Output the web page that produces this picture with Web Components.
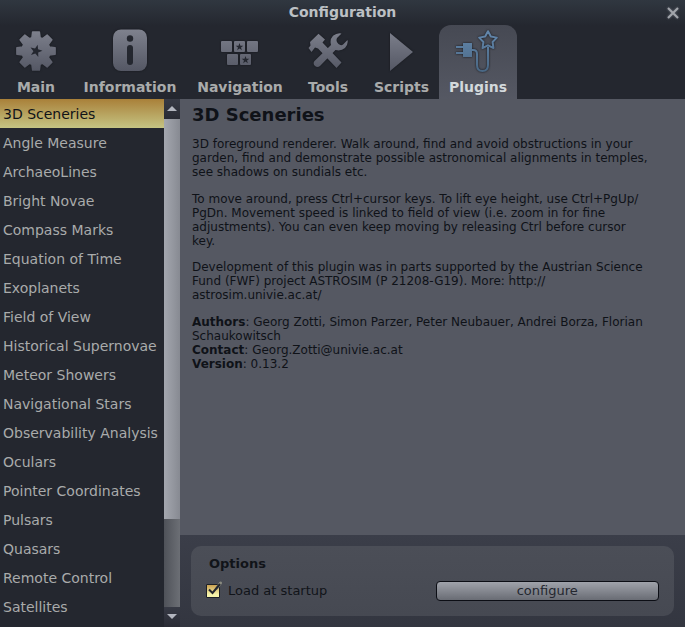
<!DOCTYPE html>
<html lang="en">
<head>
<meta charset="utf-8">
<title>Configuration</title>
<style>
html, body { height: 100%; margin: 0; background: #24272f; }
body { font: 14px "DejaVu Sans", Verdana, sans-serif; color: #a9abab; overflow: hidden; }
</style>
</head>
<body>
<config-window></config-window>
<script>
const define = (name, html, setup) => {
  const template = document.createElement('template');
  template.innerHTML = html;
  customElements.define(name, class extends HTMLElement {
    constructor() {
      super();
      this.attachShadow({ mode: 'open' }).append(template.content.cloneNode(true));
    }
    connectedCallback() { if (setup) setup(this, this.shadowRoot); }
  });
};

const star = (cx, cy, r, k, turn = 0) => {
  const pts = [];
  for (let i = 0; i < 10; i++) {
    const a = (turn - 90 + i * 36) * Math.PI / 180, q = i % 2 ? r * k : r;
    pts.push((cx + q * Math.cos(a)).toFixed(2) + ',' + (cy + q * Math.sin(a)).toFixed(2));
  }
  return pts.join(' ');
};
const gearOutline = () => {
  const pts = [], add = (r, deg) => {
    const a = deg * Math.PI / 180;
    pts.push((24 + r * Math.cos(a)).toFixed(2) + ',' + (26 + r * Math.sin(a)).toFixed(2));
  };
  for (let t = 0; t < 360; t += 45) { add(14, t - 17); add(19.4, t - 10); add(19.4, t + 10); add(14, t + 17); }
  return pts.join(' ');
};
const icons = {
  gear: `<polygon points="${gearOutline()}" stroke="url(#g)" stroke-width="1.5" stroke-linejoin="round"/><polygon fill="#24272f" points="${star(24, 26, 6.5, .4, 15)}"/>`,
  info: `<rect x="7" y="4.500" width="34" height="41.500" rx="8"/><g fill="#24272f"><circle cx="24" cy="13.500" r="3.200"/><rect x="21" y="20" width="6" height="20" rx="3"/></g>`,
  map: `<rect x="5" y="16" width="11" height="11" rx="1"/><rect x="18" y="16" width="11" height="11" rx="1"/><rect x="31" y="16" width="11" height="11" rx="1"/><rect x="11" y="29" width="11" height="11" rx="1"/><rect x="24" y="29" width="11" height="11" rx="1"/><g fill="#24272f"><polygon points="${star(23.5, 22, 4, .4)}"/><polygon points="${star(29.5, 35, 4, .4)}"/></g>`,
  tools: `<path d="M4.500 23 L6.500 20.500 L6 17 L14.500 8.700 L21 14.500 L18.500 17.500 L37.500 37.500 L32.500 43 L14 23.500 L11 22.500 L7.500 27 Z"/><path d="M37.500 8.500 L33 13 Q31.500 16.500 34.500 19 Q37 21 39 19.500 L43.500 15 Q44.500 19 41 23 Q37 26.500 31.500 25 L16 41 Q13.500 43 11 41 Q8.500 38.500 10.500 36 L27 20 Q25.500 14.500 29 10.800 Q33 7.500 37.500 8.500 Z"/>`,
  play: `<path d="M12 8 L35 27 L12 46 Z"/>`,
  plug: `<g fill="none" stroke="url(#g)" stroke-width="2"><path d="M2 22 H9 M2 28 H9 M18 25 H19 Q23 25 23 29 V40 Q23 46 28.500 46 Q34 46 34 40 V22"/><polygon stroke-linejoin="round" points="${star(34, 15.5, 9.3, .52)}"/></g><rect x="9" y="18" width="9" height="14"/>`
};

define('tab-icon', `
<style>
:host { display: block; width: 48px; height: 50px; }
svg { display: block; filter: drop-shadow(0 0 1px #14161b); }
</style>
<svg width="48" height="50" viewBox="0 0 48 50" aria-hidden="true"></svg>`, (el, root) => {
  const blue = el.getAttribute('name') === 'plug';
  root.querySelector('svg').innerHTML = `<defs><linearGradient id="g" gradientUnits="userSpaceOnUse" x1="0" y1="5" x2="0" y2="46"><stop stop-color="${blue ? '#6488ad' : '#7e818d'}"/><stop offset="1" stop-color="${blue ? '#4a6885' : '#545764'}"/></linearGradient></defs><g fill="url(#g)">${icons[el.getAttribute('name')]}</g>`;
});

define('title-bar', `
<style>
:host { display: grid; grid-template-columns: 24px 1fr 24px; align-items: center; height: 25px; text-align: center; color: #bcc0c4; }
h1 { grid-column: 2; margin: 0; font: bold 14px/25px "DejaVu Sans", sans-serif; }
button { width: 24px; height: 24px; padding: 0; border: 0; background: none; display: grid; place-items: center; }
svg { filter: drop-shadow(0 0 1px #6b6f78); }
</style>
<h1><slot></slot></h1>
<button aria-label="Close"><svg width="14" height="14" viewBox="0 0 14 14"><path d="M2 2 L12 12 M12 2 L2 12" stroke="#a2a5ab" stroke-width="2"/></svg></button>`);

define('config-tab', `
<style>
:host { display: block; }
button { box-sizing: border-box; width: 100%; height: 74px; padding: 0; border: 0; border-radius: 12px 12px 0 0; background: none; color: inherit; font: bold 14px/24px "DejaVu Sans", sans-serif; display: flex; flex-direction: column; align-items: center; white-space: nowrap; }
:host([selected]) button { background: linear-gradient(#464953, #555863); color: #d3d9dc; }
</style>
<button role="tab"><tab-icon></tab-icon><slot></slot></button>`, (el, root) => {
  const old = root.querySelector('tab-icon'), icon = document.createElement('tab-icon');
  icon.setAttribute('name', el.getAttribute('icon'));
  old.replaceWith(icon);
  root.querySelector('button').setAttribute('aria-selected', el.hasAttribute('selected'));
});

define('tab-strip', `
<style>:host { display: grid; grid-template-columns: 72px 116px 104px 72px 75px 78px; }</style>
<slot></slot>`);

define('plugin-item', `
<style>
:host { display: block; }
button { display: block; box-sizing: border-box; width: 100%; height: 29px; padding: 2px 3px 0; border: 0; background: none; color: inherit; text-align: left; font: 14px/27px "DejaVu Sans", sans-serif; white-space: nowrap; }
:host([selected]) button { background: linear-gradient(#a98039, #c5c483); color: #111318; }
</style>
<button><slot></slot></button>`);

define('plugin-list', `
<style>
:host { display: grid; grid-template-columns: 1fr 16px; min-height: 0; overflow: hidden; }
.items { overflow: hidden; min-height: 0; }
.bar { display: flex; flex-direction: column; min-height: 0; background: linear-gradient(90deg, #4f5259, #6c6f75); }
.bar button { flex: none; height: 20px; padding: 0; border: 0; background: linear-gradient(#373a45, #292b34); display: grid; place-items: center; }
.track { flex: 1; min-height: 0; }
.thumb { height: 82%; background: linear-gradient(90deg, #a4a7af, #878a92); }
</style>
<div class="items"><slot></slot></div>
<div class="bar">
<button aria-label="Scroll up"><svg width="10" height="6"><path d="M0 5 L5 0 L10 5 Z" fill="#b3b6bf"/></svg></button>
<div class="track"><div class="thumb"></div></div>
<button aria-label="Scroll down"><svg width="10" height="6"><path d="M0 0 L5 5 L10 0 Z" fill="#b3b6bf"/></svg></button>
</div>`);

define('plugin-description', `
<style>
:host { display: block; padding: 4px 16px 4px 12px; background: #555862; color: #0f1218; font-size: 12px; line-height: 14px; overflow: hidden; }
h2 { margin: 0 0 11px; font-size: 18px; line-height: 23px; }
p { margin: 0 0 13px; }
p:nth-of-type(2) { margin-bottom: 12px; }
</style>
<h2>3D Sceneries</h2>
<p>3D foreground renderer. Walk around, find and avoid obstructions in your<br>garden, find and demonstrate possible astronomical alignments in temples,<br>see shadows on sundials etc.</p>
<p>To move around, press Ctrl+cursor keys. To lift eye height, use Ctrl+PgUp/<br>PgDn. Movement speed is linked to field of view (i.e. zoom in for fine<br>adjustments). You can even keep moving by releasing Ctrl before cursor<br>key.</p>
<p>Development of this plugin was in parts supported by the Austrian Science<br>Fund (FWF) project ASTROSIM (P 21208-G19). More: http://<br>astrosim.univie.ac.at/</p>
<p><b>Authors</b>: Georg Zotti, Simon Parzer, Peter Neubauer, Andrei Borza, Florian<br>Schaukowitsch<br><b>Contact</b>: Georg.Zotti@univie.ac.at<br><b>Version</b>: 0.13.2</p>`);

define('plugin-options', `
<style>
:host { display: block; padding: 11px; background: linear-gradient(#3b3e49, #333640); color: #111419; }
fieldset { margin: 0; border: 0; padding: 8px 15px 15px; min-width: 0; border-radius: 10px; background: linear-gradient(#4b4e57, #464952); }
h3 { margin: 0 0 7px 3px; font: bold 13px/20px "DejaVu Sans", sans-serif; }
.row { display: grid; grid-template-columns: 1fr 1fr; gap: 6px; align-items: center; }
label { display: flex; align-items: center; gap: 8px; font-size: 13px; line-height: 20px; }
input { appearance: none; width: 14px; height: 14px; margin: 0; border: 1px solid #1d2027; border-radius: 1px; background: linear-gradient(#c9a050, #f6f4aa 80%); }
.box { position: relative; display: flex; }
.box svg { position: absolute; left: 0; top: -3px; pointer-events: none; }
button { height: 20px; padding: 0; border: 1px solid #0c0e15; border-radius: 4px; background: linear-gradient(#a0a3ab, #696c74); color: #24272f; font: 13px/18px "DejaVu Sans", sans-serif; }
</style>
<fieldset aria-label="Options"><h3>Options</h3>
<div class="row"><label><span class="box"><input type="checkbox" checked><svg width="18" height="16" viewBox="0 0 18 16"><path d="M11 7 L14.500 2" stroke="#8a8b80" stroke-width="3" stroke-linecap="round"/><path d="M3 8.500 L6.500 12 L14 3" fill="none" stroke="#23262d" stroke-width="2"/></svg></span>Load at startup</label><button>configure</button></div>
</fieldset>`);

define('config-window', `
<style>
:host { display: grid; grid-template-rows: 25px 74px 1fr; height: 100vh; background: linear-gradient(#303740, #24272f 26px); }
main { display: grid; grid-template-columns: 180px 1fr; min-height: 0; }
section { display: grid; grid-template-rows: 1fr auto; min-height: 0; }
</style>
<title-bar>Configuration</title-bar>
<tab-strip role="tablist">
<config-tab icon="gear">Main</config-tab><config-tab icon="info">Information</config-tab><config-tab icon="map">Navigation</config-tab><config-tab icon="tools">Tools</config-tab><config-tab icon="play">Scripts</config-tab><config-tab icon="plug" selected>Plugins</config-tab>
</tab-strip>
<main>
<plugin-list>
<plugin-item selected>3D Sceneries</plugin-item><plugin-item>Angle Measure</plugin-item><plugin-item>ArchaeoLines</plugin-item><plugin-item>Bright Novae</plugin-item><plugin-item>Compass Marks</plugin-item><plugin-item>Equation of Time</plugin-item><plugin-item>Exoplanets</plugin-item><plugin-item>Field of View</plugin-item><plugin-item>Historical Supernovae</plugin-item><plugin-item>Meteor Showers</plugin-item><plugin-item>Navigational Stars</plugin-item><plugin-item>Observability Analysis</plugin-item><plugin-item>Oculars</plugin-item><plugin-item>Pointer Coordinates</plugin-item><plugin-item>Pulsars</plugin-item><plugin-item>Quasars</plugin-item><plugin-item>Remote Control</plugin-item><plugin-item>Satellites</plugin-item>
</plugin-list>
<section><plugin-description></plugin-description><plugin-options></plugin-options></section>
</main>`);
</script>
</body>
</html>
